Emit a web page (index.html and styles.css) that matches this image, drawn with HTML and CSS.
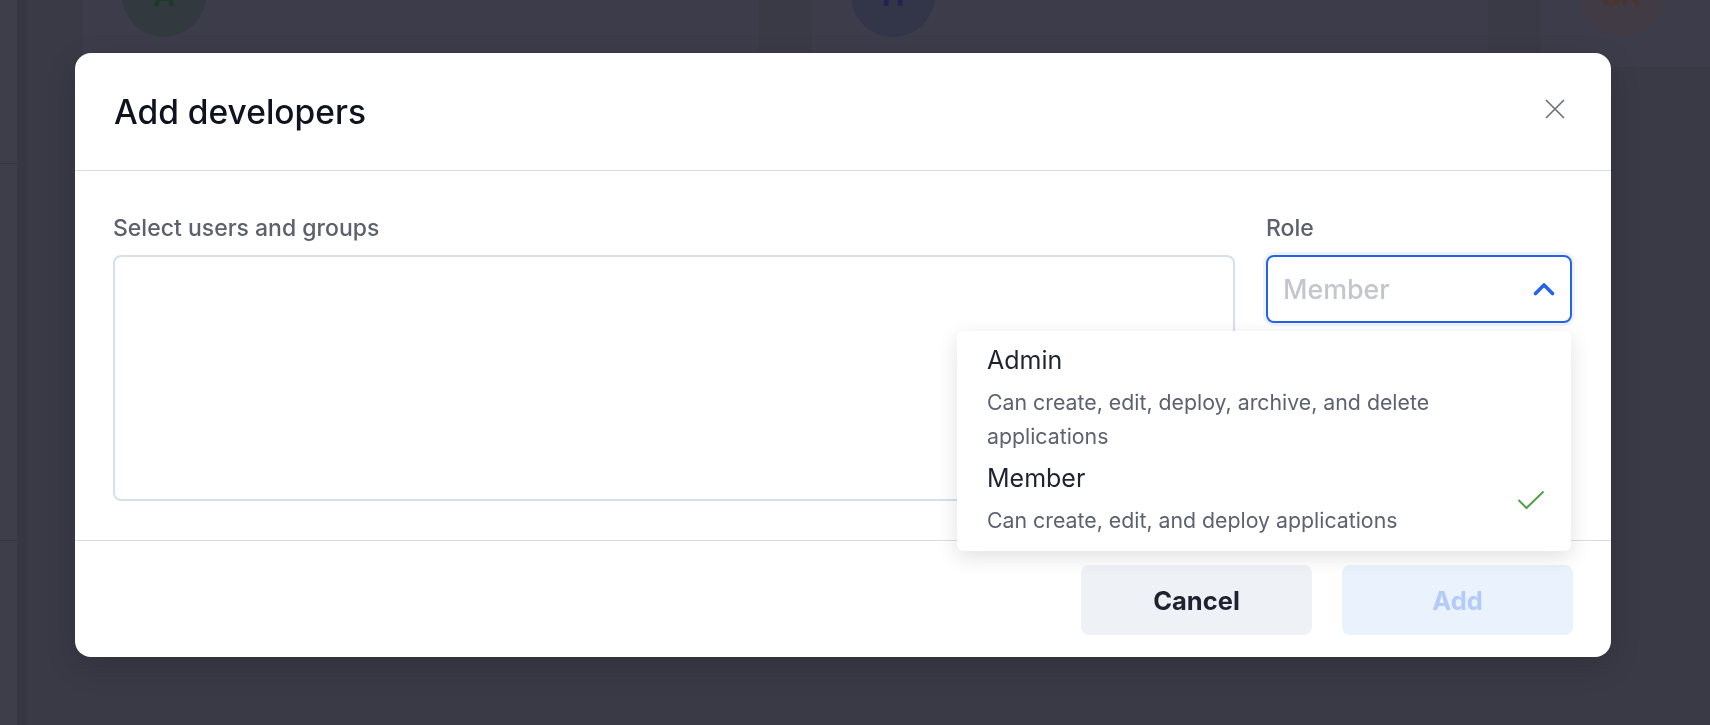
FILE: index.html
```html
<!DOCTYPE html>
<html lang="en">
<head>
    <meta charset="UTF-8">
    <meta name="viewport" content="width=device-width, initial-scale=1.0">
    <title>Add developers</title>
    <link rel="stylesheet" href="styles.css">
</head>
<body>
    <div class="page">
        <aside class="sidebar">
            <div class="sidebar-top"></div>
            <div class="sidebar-middle"></div>
        </aside>
        <main class="content">
            <div class="cards">
                <div class="card"><span class="avatar avatar-green">A</span></div>
                <div class="card"><span class="avatar avatar-blue">H</span></div>
                <div class="card"><span class="avatar avatar-brown">SK</span></div>
            </div>
        </main>
    </div>

    <div class="overlay">
        <div class="modal" role="dialog">
            <header class="modal-header">
                <h2>Add developers</h2>
                <button class="close-button" aria-label="Close">
                    <svg width="20" height="20" viewBox="0 0 20 20">
                        <path d="M1 1 L19 19 M19 1 L1 19" stroke="#6b6e78" stroke-width="1.6" fill="none"/>
                    </svg>
                </button>
            </header>

            <div class="modal-body">
                <div class="field">
                    <label for="users">Select users and groups</label>
                    <div class="users-input" id="users"></div>
                </div>

                <div class="field">
                    <label>Role</label>
                    <div class="select-wrap">
                        <div class="role-select">
                            <span class="placeholder">Member</span>
                            <svg width="22" height="14" viewBox="0 0 22 14">
                                <path d="M2.5 11.5 L11 3 L19.5 11.5" stroke="#2563eb" stroke-width="3.6" fill="none" stroke-linecap="round" stroke-linejoin="round"/>
                            </svg>
                        </div>
                        <ul class="role-menu">
                            <li class="role-option">
                                <div class="option-text">
                                    <div class="option-name">Admin</div>
                                    <div class="option-desc">Can create, edit, deploy, archive, and delete applications</div>
                                </div>
                                <span class="option-check"></span>
                            </li>
                            <li class="role-option">
                                <div class="option-text">
                                    <div class="option-name">Member</div>
                                    <div class="option-desc">Can create, edit, and deploy applications</div>
                                </div>
                                <span class="option-check">
                                    <svg width="28" height="20" viewBox="0 0 28 20">
                                        <path d="M1.5 10 L9.5 18 L26.5 1.5" stroke="#55a04a" stroke-width="2" fill="none"/>
                                    </svg>
                                </span>
                            </li>
                        </ul>
                    </div>
                </div>
            </div>

            <footer class="modal-footer">
                <button class="btn btn-cancel">Cancel</button>
                <button class="btn btn-add" disabled>Add</button>
            </footer>
        </div>
    </div>
</body>
</html>
```

FILE: styles.css
```css
* {
    box-sizing: border-box;
}

body {
    margin: 0;
    height: 100vh;
    overflow: hidden;
    font-family: Inter, "Noto Sans", sans-serif;
    background-color: #393a46;
}

/* page behind the dialog */
.page {
    display: flex;
    height: 100vh;
}

.sidebar {
    width: 17px;
    flex-shrink: 0;
    background-color: #3d3e4a;
}

.sidebar-top {
    height: 164px;
    border-bottom: 1px solid #33343f;
}

.sidebar-middle {
    height: 377px;
    border-bottom: 1px solid #33343f;
}

.content {
    flex: 1;
    overflow: hidden;
    border-left: 10px solid #363743;
    padding-left: 56px;
}

.cards {
    display: flex;
    gap: 53px;
    margin-top: -60px;
}

.card {
    width: 676px;
    height: 127px;
    flex-shrink: 0;
    padding: 13px 0 0 39px;
    background-color: #3d3c4a;
}

.avatar {
    width: 84px;
    height: 84px;
    border-radius: 50%;
    display: flex;
    align-items: center;
    justify-content: center;
    font-size: 30px;
    font-weight: 700;
}

.avatar-green {
    background-color: #323a40;
    color: #1d3a28;
}

.avatar-blue {
    background-color: #333548;
    color: #212452;
}

.avatar-brown {
    background-color: #413b45;
    color: #4b352f;
}

/* dialog */
.overlay {
    position: fixed;
    inset: 0;
    padding: 53px 0 0 75px;
}

.modal {
    width: 1536px;
    background-color: #fff;
    border-radius: 16px;
    box-shadow: 0 10px 30px rgba(0, 0, 0, 0.15);
}

.modal-header {
    height: 118px;
    display: flex;
    align-items: center;
    justify-content: space-between;
    padding: 0 46px 0 39px;
    border-bottom: 1px solid #d5dde9;
}

.modal-header h2 {
    margin: 0;
    font-size: 33.5px;
    font-weight: 500;
    color: #0f1320;
}

.close-button {
    width: 20px;
    height: 20px;
    padding: 0;
    margin-bottom: 6px;
    border: none;
    background: none;
    cursor: pointer;
}

.close-button svg {
    display: block;
}

.modal-body {
    display: grid;
    grid-template-columns: 1fr 306px;
    column-gap: 31px;
    padding: 42px 39px 39px 38px;
}

.field label {
    display: block;
    margin-bottom: 12px;
    font-size: 23px;
    line-height: 30px;
    font-weight: 500;
    color: #5d606d;
}

.users-input {
    height: 246px;
    border: 2px solid #d6dfec;
    border-radius: 8px;
}

.select-wrap {
    position: relative;
}

.role-select {
    height: 68px;
    display: flex;
    align-items: center;
    justify-content: space-between;
    padding: 0 15px 0 15px;
    border: 2px solid #2563eb;
    border-radius: 8px;
    box-shadow: 0 0 0 3px rgba(37, 99, 235, 0.08);
}

.placeholder {
    font-size: 26.8px;
    font-weight: 500;
    color: #c5c6cc;
}

.role-select svg {
    display: block;
}

.role-menu {
    position: absolute;
    top: calc(100% + 8px);
    right: 1px;
    width: 614px;
    margin: 0;
    padding: 14px 26px 14px 30px;
    list-style: none;
    display: flex;
    flex-direction: column;
    gap: 10px;
    background-color: #fff;
    border-radius: 6px;
    box-shadow: 0 6px 20px rgba(20, 25, 40, 0.13);
}

.role-option {
    display: flex;
    align-items: center;
    gap: 18px;
}

.option-text {
    flex: 1;
}

.option-name {
    margin-bottom: 10px;
    font-size: 25px;
    line-height: 30px;
    font-weight: 400;
    color: #1f2330;
}

.option-desc {
    font-size: 21.3px;
    line-height: 34px;
    color: #5e6170;
}

.option-check {
    width: 28px;
    flex-shrink: 0;
}

.option-check svg {
    display: block;
}

.modal-footer {
    display: flex;
    justify-content: flex-end;
    gap: 30px;
    padding: 24px 38px 22px;
    border-top: 1px solid #d5dde9;
}

.btn {
    width: 231px;
    height: 70px;
    border: none;
    border-radius: 8px;
    font-family: Inter, "Noto Sans", sans-serif;
    font-size: 25.5px;
    font-weight: 700;
    cursor: pointer;
}

.btn-cancel {
    background-color: #eef1f6;
    color: #1f2330;
}

.btn-add {
    background-color: #eaf2fe;
    color: #b3cbfb;
    cursor: default;
}
```
